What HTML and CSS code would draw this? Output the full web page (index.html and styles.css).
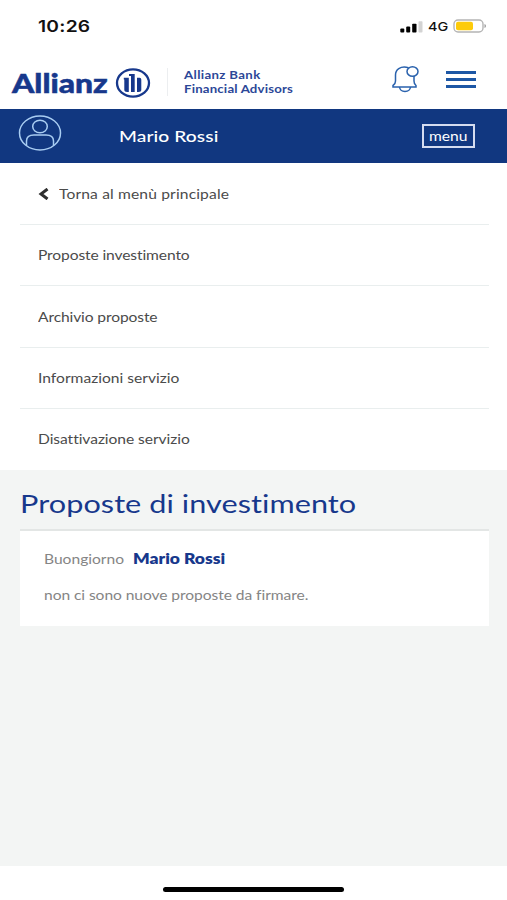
FILE: index.html
```html
<!DOCTYPE html>
<html lang="it">
  <head>
    <meta charset="UTF-8" />
    <meta name="viewport" content="width=device-width, initial-scale=1.0" />
    <title>Proposte di investimento</title>
    <link rel="stylesheet" href="styles.css">
  </head>
  <body>
    <div class="status">
      <span class="wide time">10:26</span>
      <div class="status-right">
        <svg width="24" height="12" viewBox="0 0 24 12">
          <rect x="0.3" y="7.5" width="4" height="4" rx="1" fill="#000" />
          <rect x="6.2" y="5.5" width="4" height="6" rx="1" fill="#000" />
          <rect x="12.2" y="2.8" width="4.3" height="8.7" rx="0.8" fill="#000" />
          <rect x="18.5" y="0.3" width="4" height="11.2" rx="0.8" fill="#d3d3d3" />
        </svg>
        <span class="wide rete">4G</span>
        <svg class="batteria" width="34" height="14" viewBox="0 0 34 14">
          <rect x="1" y="1" width="29" height="12" rx="4" fill="#fff" stroke="#b4b4b4" stroke-width="1.4" />
          <rect x="3" y="2.8" width="17" height="8.4" rx="2" fill="#fdcb0a" />
          <path d="M31.5 5v4c2-.8 2-3.2 0-4z" fill="#999" />
        </svg>
      </div>
    </div>

    <header class="header">
      <span class="wide marca">Allianz</span>
      <svg class="logo" width="36" height="32" viewBox="0 0 36 32">
        <ellipse cx="18" cy="16" rx="16" ry="13.6" fill="none" stroke="#17388c" stroke-width="2.3" />
        <path d="M14 7h5.700v18h-3.700V9H14zM8.800 10.800h5v14.200h-1.600c-1.800 0-2.900-.8-2.900-2.200v-10.300h-.5zM22 10.800h2.600q1.700 0 1.700 1.600v10.400q0 2.200-2.800 2.200h-1.500z" fill="#17388c" />
      </svg>
      <div class="banca">
        <span class="wide banca1">Allianz Bank</span>
        <span class="wide banca2">Financial Advisors</span>
      </div>
      <svg class="campana" width="30" height="30" viewBox="0 0 30 30" fill="none" stroke="#2a62ad" stroke-width="1.5">
        <path d="M17.500 3.700C9 1.500 4.500 6 4.500 11v6q0 3-2.500 4.500v1.500h23v-1.500q-2-1.500-2-4.500V12" />
        <path d="M8.500 23c.8 6 10.200 6 11 0" />
        <ellipse cx="21.500" cy="7.500" rx="5.500" ry="4.800" />
      </svg>
      <div class="hamburger"><i></i><i></i><i></i></div>
    </header>

    <div class="utente">
      <svg class="avatar" width="44" height="38" viewBox="0 0 44 38" fill="none" stroke="#a9cdf2" stroke-width="1.5">
        <ellipse cx="22" cy="19" rx="20.500" ry="17" />
        <ellipse cx="22" cy="12.500" rx="7.300" ry="6.300" />
        <path d="M8.500 31.500V27q0-6 7.500-6h12q7.500 0 7.500 6v4.500" />
      </svg>
      <span class="wide nome">Mario Rossi</span>
      <div class="menu-btn"><span class="wide">menu</span></div>
    </div>

    <nav class="menu">
      <div class="voce">
        <svg class="freccia" width="12" height="12" viewBox="0 0 12 12">
          <path d="M9.500 1L3 6l6.500 5" fill="none" stroke="#2f2f2f" stroke-width="3" />
        </svg>
        <span class="wide v0">Torna al menù principale</span>
      </div>
      <div class="voce"><span class="wide v1">Proposte investimento</span></div>
      <div class="voce"><span class="wide v2">Archivio proposte</span></div>
      <div class="voce"><span class="wide v3">Informazioni servizio</span></div>
      <div class="voce"><span class="wide v4">Disattivazione servizio</span></div>
    </nav>

    <main class="contenuto">
      <h1><span class="wide">Proposte di investimento</span></h1>
      <div class="card">
        <div class="riga">
          <span class="wide saluto">Buongiorno</span>
          <span class="wide cliente">Mario Rossi</span>
        </div>
        <div class="riga"><span class="wide testo">non ci sono nuove proposte da firmare.</span></div>
      </div>
    </main>

    <footer class="home"><div class="barra"></div></footer>
  </body>
</html>
```
FILE: styles.css
```css
* {
  box-sizing: border-box;
}

body {
  margin: 0;
  height: 900px;
  display: flex;
  flex-direction: column;
  overflow: hidden;
  background-color: #fff;
  font-family: Lato, "Open Sans", sans-serif;
  font-size: 13px;
  font-variant-ligatures: none;
  color: #4b4b4b;
}

svg {
  display: block;
  flex: none;
}

/* extended letterforms */
.wide {
  display: block;
  width: max-content;
  white-space: nowrap;
  transform: scaleX(1.2);
  transform-origin: left center;
}

.status {
  height: 52px;
  padding: 0 20px 0 38px;
  display: flex;
  justify-content: space-between;
  align-items: center;
  color: #111;
}

.time {
  font-family: Inter, sans-serif;
  font-size: 16px;
  font-weight: 600;
  letter-spacing: 0.2px;
}

.status-right {
  display: flex;
  align-items: center;
}

.status-right svg:first-child {
  margin-top: 2px;
}

.rete {
  width: 25px;
  margin-left: 4px;
  font-family: Inter, sans-serif;
  font-size: 12px;
  font-weight: 500;
}

.header {
  height: 57px;
  padding-left: 12px;
  display: flex;
  align-items: center;
}

.marca {
  width: 103px;
  padding-top: 4px;
  font-size: 26.5px;
  font-weight: 900;
  color: #17388c;
  -webkit-text-stroke: 0.5px #17388c;
}

.logo {
  margin-top: 5px;
}

.banca {
  height: 28px;
  width: 222px;
  margin: 2px 0 0 16px;
  padding-left: 16px;
  border-left: 1px solid #eceef0;
  font-size: 11px;
  font-weight: 700;
  line-height: 14px;
  color: #2c4798;
}

.banca1 {
  letter-spacing: 0.3px;
}

.banca2 {
  letter-spacing: 0.15px;
}

.campana {
  margin: -4px 0 0 2px;
}

.hamburger {
  width: 30px;
  margin: -2px 0 0 25px;
  display: flex;
  flex-direction: column;
  gap: 4px;
}

.hamburger i {
  height: 2.7px;
  background-color: #1d57a5;
}

.utente {
  height: 54px;
  padding: 0 32px 6px 18px;
  display: flex;
  align-items: center;
  background-color: #113780;
  color: #fff;
}

.nome {
  width: 303px;
  margin: 5px 0 0 57px;
  font-size: 16px;
  font-weight: 500;
  letter-spacing: 0.08px;
}

.menu-btn {
  width: 53px;
  height: 24px;
  margin-top: 5px;
  padding-left: 5px;
  border: 2px solid #d5dcf0;
  line-height: 20px;
}

.menu {
  height: 307px;
  padding: 0 18px 0 20px;
  display: flex;
  flex-direction: column;
}

.voce {
  flex: 1;
  padding: 1px 0 0 18px;
  display: flex;
  align-items: center;
  border-bottom: 1px solid #e9eeee;
}

.voce:last-child {
  padding: 0 0 1px 18px;
  border-bottom: none;
}

.freccia {
  margin-right: 9px;
}

.v0 {
  letter-spacing: 0.12px;
}

.v1,
.v2 {
  letter-spacing: -0.1px;
}

.v3 {
  margin-top: -1px;
}

.v4 {
  letter-spacing: -0.05px;
}

.contenuto {
  height: 396px;
  padding: 17px 18px 0 20px;
  background-color: #f3f5f4;
}

h1 {
  height: 42px;
  margin: 0;
  font-size: 25.5px;
  font-weight: 400;
  line-height: 33px;
  letter-spacing: 0.06px;
  color: #17388c;
}

.card {
  height: 97px;
  padding: 18px 24px;
  border-top: 2px solid #e3e6e5;
  background-color: #fff;
  color: #858585;
}

.riga {
  height: 36px;
  display: flex;
  line-height: 20px;
}

.saluto {
  width: 89px;
}

.testo {
  letter-spacing: -0.06px;
}

.cliente {
  font-size: 14.5px;
  font-weight: 800;
  color: #17388c;
}

.home {
  flex: 1;
  padding-top: 21px;
}

.barra {
  width: 181px;
  height: 5px;
  margin-left: 163px;
  border-radius: 3px;
  background-color: #000;
}
```
